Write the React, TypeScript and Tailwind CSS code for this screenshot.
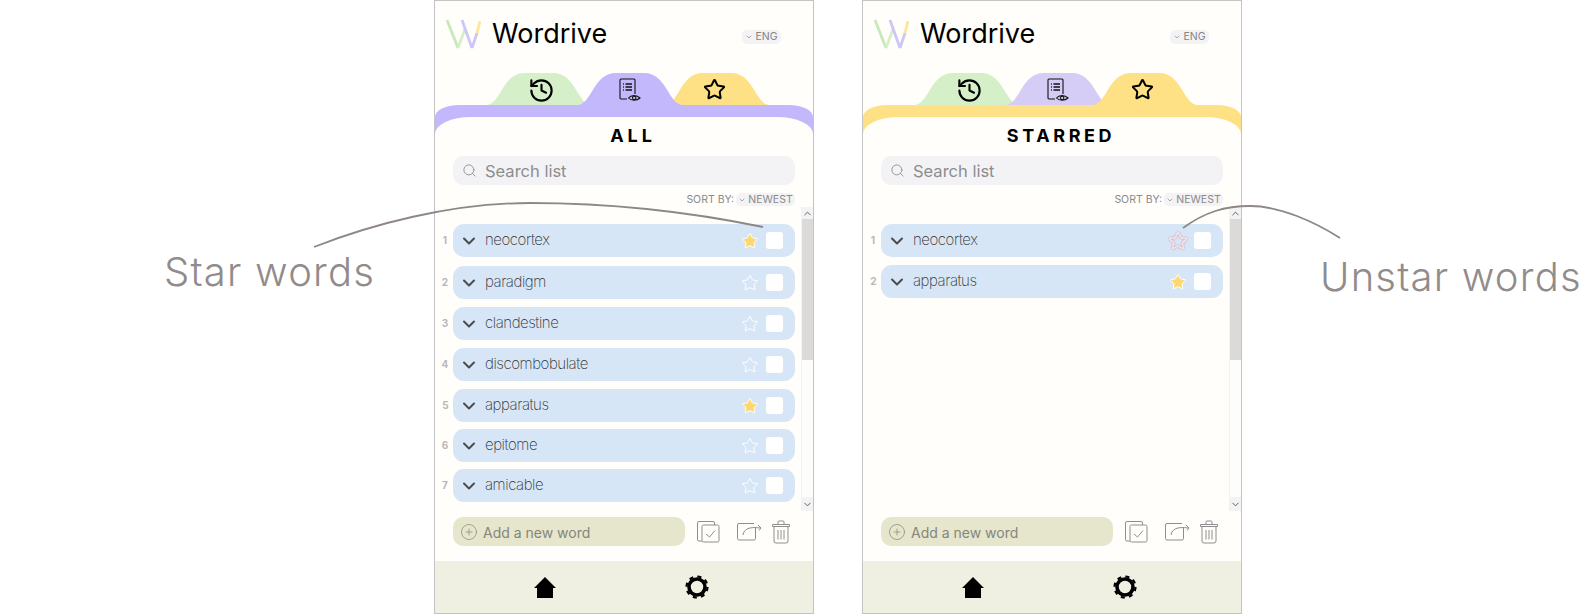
import { ChevronDown, ChevronUp, CirclePlus, History, Search, Star } from "lucide-react";

type WordRow = { word: string; star: "none" | "on" | "pink"; rowClass: string };

const allWords: WordRow[] = [
  { word: "neocortex", star: "on", rowClass: "mt-[18px]" },
  { word: "paradigm", star: "none", rowClass: "mt-[9px]" },
  { word: "clandestine", star: "none", rowClass: "mt-[8px]" },
  { word: "discombobulate", star: "none", rowClass: "mt-[8px]" },
  { word: "apparatus", star: "on", rowClass: "mt-[8px] ml-[1px]" },
  { word: "epitome", star: "none", rowClass: "mt-[7px]" },
  { word: "amicable", star: "none", rowClass: "mt-[7px]" },
];

const starredWords: WordRow[] = [
  { word: "neocortex", star: "pink", rowClass: "mt-[18px]" },
  { word: "apparatus", star: "on", rowClass: "mt-[8px] ml-[1px]" },
];

const Logo = () => (
  <svg width="36" height="31" viewBox="0 0 36 31" fill="none" strokeWidth="2.8">
    <path d="M2 1 L13 29" stroke="#c8e8b8" />
    <path d="M13 29 L20 10" stroke="#d5efc8" />
    <path d="M17 1 L27 29" stroke="#cdc6f8" />
    <path d="M27 29 L32 14" stroke="#cdc6f8" />
    <path d="M32 14 L35 2" stroke="#fbe69a" />
  </svg>
);

const DocEye = () => (
  <svg width="22" height="24" viewBox="0 0 22 24" fill="none" stroke="#111" strokeWidth="1.1">
    <path d="M8 21 H2 a1 1 0 0 1 -1 -1 V2 a1 1 0 0 1 1 -1 H15 a1 1 0 0 1 1 1 V16" />
    <path d="M6.5 6 H13 M6.5 9 H13 M6.5 12 H13" strokeWidth="1.3" />
    <path d="M4 6 H4.9 M4 9 H4.9 M4 12 H4.9" strokeWidth="1.3" />
    <path d="M9.5 20 C12 16.8 18 16.8 21 20 C18 23 12 23 9.5 20 Z" />
    <circle cx="15.2" cy="20" r="1.7" />
  </svg>
);

const TabShape = ({ fill }: { fill: string }) => (
  <svg width="104" height="32" viewBox="0 0 104 32" className="absolute inset-0">
    <path
      d="M0 32 C6 31 9 26 13 20 C20 8 26 0 38 0 H66 C78 0 84 8 91 20 C95 26 98 31 104 32 Z"
      fill={fill}
    />
  </svg>
);

const Tabs = ({ active }: { active: "all" | "starred" }) => (
  <div className="flex h-[32px] pl-[52px]">
    <div className="relative w-[104px] h-[32px] flex items-center justify-center">
      <TabShape fill="#d5efc8" />
      <History size={27} strokeWidth={1.9} color="#000" className="relative ml-[4px] mb-[-2px]" />
    </div>
    <div className={`relative w-[104px] h-[32px] -ml-[13px] flex items-center justify-center ${active === "all" ? "z-10" : ""}`}>
      <TabShape fill={active === "all" ? "#c4b8fd" : "#d5cdf5"} />
      <span className="relative mt-[2px] flex">
        <DocEye />
      </span>
    </div>
    <div className={`relative w-[104px] h-[32px] -ml-[17px] flex items-center justify-center ${active === "starred" ? "z-10" : ""}`}>
      <TabShape fill="#fee085" />
      <Star size={23} strokeWidth={2.1} color="#000" className="relative mr-[5px]" />
    </div>
  </div>
);

const RowStar = ({ star }: { star: WordRow["star"] }) => {
  if (star === "on") return <Star size={18} fill="#fed76f" color="#fff" strokeWidth={1.3} className="shrink-0" />;
  if (star === "pink")
    return <Star size={20} fill="none" color="#fbe6ea" strokeWidth={1.6} className="shrink-0 drop-shadow-[0_0_1px_#d08f9b]" />;
  return <Star size={18} fill="none" color="#fff" strokeWidth={1.3} className="shrink-0" />;
};

const Row = ({ row, n }: { row: WordRow; n: number }) => (
  <div className={`flex items-center ${row.rowClass}`}>
    <span className="w-[18px] -ml-[17px] mr-[-1px] text-center text-[10px] font-bold text-[#b8b8b8]">{n}</span>
    <div className="flex h-[33px] w-[342px] shrink-0 items-center rounded-[11px] bg-[#d7e6f6] pl-[6px] pr-[12px]">
      <ChevronDown size={20} strokeWidth={2.4} color="#4b4b4d" />
      <span className="ml-[6px] text-[15px] font-extralight tracking-[-0.45px] text-[#2f3235]">{row.word}</span>
      <span className="ml-auto flex w-[16px] justify-center">
        <RowStar star={row.star} />
      </span>
      <span className="ml-[8px] h-[17px] w-[17px] rounded-[3px] bg-white" />
    </div>
  </div>
);

const Scrollbar = () => (
  <div className="flex h-[304px] w-[12px] flex-col border-l border-[#f2f2f0] bg-[#fdfdfb]">
    <div className="flex h-[12px] items-center justify-center bg-[#f3f3f3]">
      <ChevronUp size={11} color="#555" strokeWidth={2} />
    </div>
    <div className="h-[141px] bg-[#dcd9d9]" />
    <div className="mt-auto flex h-[14px] items-center justify-center bg-[#f3f3f3]">
      <ChevronDown size={11} color="#555" strokeWidth={2} />
    </div>
  </div>
);

const ActionIcons = () => (
  <>
    <svg width="23" height="22" viewBox="0 0 23 22" fill="none" stroke="#8e8e8e" strokeWidth="1" className="ml-[12px]">
      <path d="M5 20 H2 a1.5 1.5 0 0 1 -1.5 -1.5 V2 a1.5 1.5 0 0 1 1.5 -1.5 H16 a1.5 1.5 0 0 1 1.5 1.5 V4" />
      <rect x="5" y="4" width="17" height="17" rx="1.5" />
      <path d="M9 13 L12.5 16 L18 9.5" />
    </svg>
    <svg width="26" height="19" viewBox="0 0 26 19" fill="none" stroke="#8e8e8e" strokeWidth="1" className="ml-[17px]">
      <path d="M18.5 5 V16.5 a1.5 1.5 0 0 1 -1.5 1.5 H2 a1.5 1.5 0 0 1 -1.5 -1.5 V3 a1.5 1.5 0 0 1 1.5 -1.5 H17" />
      <path d="M6 13 C7 7 12 4.5 23 6 M21 3 L24 6 L22 8.5" />
    </svg>
    <svg width="18" height="24" viewBox="0 0 18 24" fill="none" stroke="#8e8e8e" strokeWidth="1" className="ml-[9px]">
      <path d="M.5 4.5 H17.5 V6.5 H.5 Z M6 4.5 V2 a1 1 0 0 1 1 -1 H11 a1 1 0 0 1 1 1 V4.5" />
      <path d="M2 6.5 V21 a2 2 0 0 0 2 2 H14 a2 2 0 0 0 2 -2 V6.5" />
      <path d="M6 10 V19.5 M9 10 V19.5 M12 10 V19.5" />
    </svg>
  </>
);

const Phone = ({ active, title, titleClass, words }: { active: "all" | "starred"; title: string; titleClass: string; words: WordRow[] }) => (
  <div className="flex h-[614px] w-[380px] shrink-0 flex-col border border-[#c4c4c4] bg-[#fffefa]">
    <div className="flex h-[72px] shrink-0 items-start pl-[10px]">
      <div className="mt-[18px] flex">
        <Logo />
      </div>
      <span className="ml-[11px] mt-[15px] text-[27px] font-normal leading-[36px] text-black">Wordrive</span>
      <span className="ml-auto mr-[32px] mt-[29px] flex h-[14px] w-[39px] items-center justify-center rounded-[5px] bg-[#f3f3f5] text-[10.5px] text-[#848484]">
        <ChevronDown size={8} color="#848484" className="mr-[2px]" />
        ENG
      </span>
    </div>
    <Tabs active={active} />
    <div className={`flex flex-1 flex-col rounded-tl-[24px_12px] rounded-tr-[24px_12px] pt-[12px] ${active === "all" ? "bg-[#c4b8fd]" : "bg-[#fee085]"}`}>
      <div className="flex-1 rounded-tl-[36px_17px] rounded-tr-[36px_17px] bg-[#fffefa] pl-[18px]">
        <h2 className={`mt-[7px] text-center text-[18px] font-bold leading-[24px] text-black ${titleClass}`}>{title}</h2>
        <div className="mt-[8px] flex h-[29px] w-[342px] items-center rounded-[10px] bg-[#f3f3f5] pl-[9px]">
          <Search size={15} color="#8c8c8c" strokeWidth={1.4} />
          <span className="ml-[8px] pt-[1px] text-[16.5px] text-[#8d8d8d]">Search list</span>
        </div>
        <div className="mt-[8px] flex h-[13px] w-[342px] items-center justify-end text-[10.5px] text-[#8a8a8a]">
          SORT BY:
          <span className="ml-[2px] flex h-[13px] w-[59px] items-center justify-center rounded-[5px] bg-[#f3f3f5]">
            <ChevronDown size={8} color="#848484" className="mr-[2px]" />
            NEWEST
          </span>
        </div>
        <div className="flex h-[304px] items-start">
          <div className="w-[342px] shrink-0">
            {words.map((row, i) => (
              <Row key={row.word} row={row} n={i + 1} />
            ))}
          </div>
          <div className="ml-[6px] mt-[1px]">
            <Scrollbar />
          </div>
        </div>
        <div className="mt-[7px] flex items-center">
          <div className="flex h-[29px] w-[232px] items-center rounded-[10px] bg-[#e6e6cd] pl-[7px]">
            <CirclePlus size={18} color="#8a8a80" strokeWidth={1} />
            <span className="ml-[5px] pt-[1px] text-[14px] text-[#85857c]">Add a new word</span>
          </div>
          <ActionIcons />
        </div>
      </div>
      <div className="flex h-[52px] shrink-0 items-center bg-[#eff0e2] pl-[99px]">
        <svg width="22" height="21" viewBox="0 0 22 21">
          <path d="M11 0 L22 11 H19 V21 H3 V11 H0 Z" fill="#000" />
        </svg>
        <svg width="24" height="24" viewBox="0 0 24 24" fill="none" className="ml-[129px]">
          <circle cx="12" cy="12" r="8" stroke="#000" strokeWidth="3.6" />
          <circle cx="12" cy="12" r="10.5" stroke="#000" strokeWidth="2.2" strokeDasharray="4.1 4.15" />
        </svg>
      </div>
    </div>
  </div>
);

const App = () => {
  return (
    <div className="relative flex h-[614px] w-[1582px] overflow-hidden bg-white font-['Inter',sans-serif]">
      <aside className="w-[434px] shrink-0 pl-[164px] pt-[245px] text-[40px] font-light leading-[54px] tracking-[1.2px] text-[#928b8b] whitespace-nowrap">
        Star words
      </aside>
      <Phone active="all" title="ALL" titleClass="tracking-[0.22em]" words={allWords} />
      <div className="w-[48px] shrink-0" />
      <Phone active="starred" title="STARRED" titleClass="tracking-[0.2em]" words={starredWords} />
      <aside className="shrink-0 pl-[78px] pt-[250px] text-[40px] font-light leading-[54px] tracking-[1.2px] text-[#928b8b] whitespace-nowrap">
        Unstar words
      </aside>
      <svg width="1582" height="614" viewBox="0 0 1582 614" fill="none" className="absolute inset-0 pointer-events-none">
        <path d="M314 247 C370 225 450 203 530 203 C620 203 700 214 763 227" stroke="#8f8787" strokeWidth="1.8" />
        <path d="M1183 228 C1205 212 1225 206 1250 206 C1280 206 1315 222 1340 238" stroke="#8f8787" strokeWidth="1.8" />
      </svg>
    </div>
  );
};

export default App;
